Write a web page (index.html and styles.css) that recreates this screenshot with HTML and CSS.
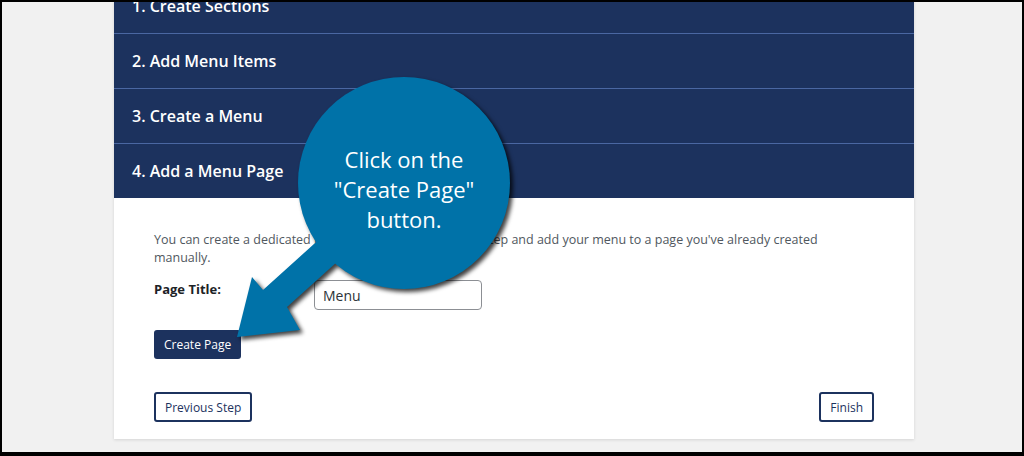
FILE: index.html
```html
<!DOCTYPE html>
<html lang="en">
<head>
    <meta charset="UTF-8">
    <meta name="viewport" content="width=device-width, initial-scale=1.0">
    <title>Menu Setup Wizard</title>
    <link rel="stylesheet" href="styles.css">
</head>
<body>
    <div class="frame">
        <div class="wizard">
            <div class="step-head">1. Create Sections</div>
            <div class="step-head">2. Add Menu Items</div>
            <div class="step-head">3. Create a Menu</div>
            <div class="step-head">4. Add a Menu Page</div>

            <div class="step-body">
                <p class="intro">You can create a dedicated menu page here, or skip this step and add your menu to a page you've already created manually.</p>

                <div class="form-row">
                    <label for="page-title">Page Title:</label>
                    <input type="text" id="page-title" value="Menu">
                </div>

                <button type="button" class="btn-primary">Create Page</button>

                <div class="step-nav">
                    <button type="button" class="btn-outline">Previous Step</button>
                    <button type="button" class="btn-outline">Finish</button>
                </div>
            </div>
        </div>

        <!-- annotation bubble over the screenshot -->
        <div class="callout">
            <svg class="callout-shape" width="310" height="290" viewBox="0 0 310 290">
                <polygon points="125,146 43,220 32,207 17,267 80,260 67,237 148,164" fill="#0072a8"/>
                <circle cx="184" cy="113" r="106" fill="#0072a8"/>
            </svg>
            <div class="callout-text">Click on the<br>"Create Page"<br>button.</div>
        </div>
    </div>
</body>
</html>
```

FILE: styles.css
```css
html {
    background: #000;
}
body {
    margin: 0;
    font-family: "Open Sans", Arial, sans-serif;
}
.frame {
    position: relative;
    margin: 2px 2px 0 2px;
    height: 450px;
    background: #f1f1f1;
    overflow: hidden;
}
.wizard {
    width: 800px;
    margin: -23px 0 0 112px;
    background: #fff;
    box-shadow: 0 1px 3px rgba(0, 0, 0, 0.12);
}
.step-head {
    height: 54px;
    line-height: 54px;
    padding-left: 18px;
    background: #1c325e;
    color: #fff;
    font-size: 16px;
    font-weight: 600;
    border-bottom: 1px solid #4a67a2;
}
.step-head:nth-child(4) {
    border-bottom: none;
}
.step-body {
    padding: 33px 40px 17px;
}
.intro {
    margin: 0;
    font-size: 12.5px;
    line-height: 18px;
    color: #50575e;
}
.form-row {
    display: flex;
    align-items: flex-start;
    margin-top: 13px;
}
.form-row label {
    width: 160px;
    font-size: 13px;
    line-height: 18px;
    font-weight: 700;
    color: #1d2327;
}
.form-row input {
    box-sizing: border-box;
    width: 168px;
    height: 30px;
    padding: 0 8px;
    border: 1px solid #8c8f94;
    border-radius: 4px;
    font-family: inherit;
    font-size: 14px;
    color: #2c3338;
}
.btn-primary {
    display: block;
    box-sizing: border-box;
    height: 29px;
    margin-top: 20px;
    padding: 0 10px;
    background: #1c325e;
    color: #fff;
    border: none;
    border-radius: 3px;
    font-family: inherit;
    font-size: 12px;
}
.step-nav {
    display: flex;
    justify-content: space-between;
    margin-top: 33px;
}
.btn-outline {
    box-sizing: border-box;
    height: 30px;
    padding: 0 9px;
    background: #fff;
    color: #1c325e;
    border: 2px solid #1c325e;
    border-radius: 3px;
    font-family: inherit;
    font-size: 12px;
}
.callout {
    position: absolute;
    left: 218px;
    top: 68px;
    width: 310px;
    height: 290px;
}
.callout-shape {
    display: block;
    filter: drop-shadow(3px 3px 2px rgba(0, 0, 0, 0.75));
}
.callout-text {
    position: absolute;
    left: 78px;
    top: 74px;
    width: 212px;
    text-align: center;
    color: #fff;
    font-size: 22px;
    line-height: 30px;
}
```
